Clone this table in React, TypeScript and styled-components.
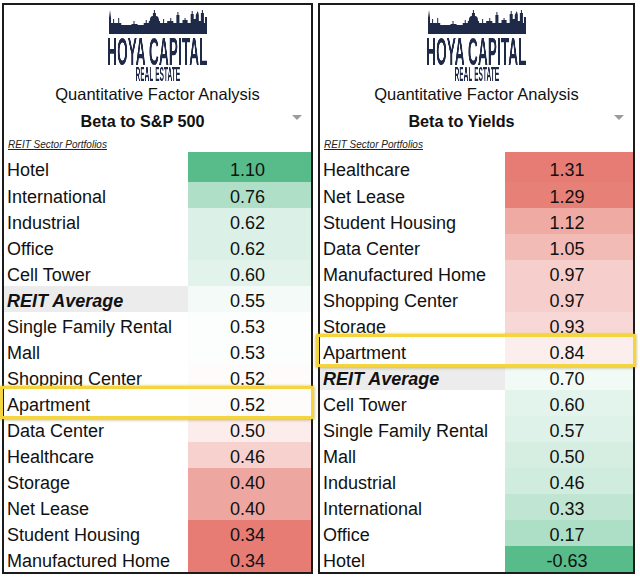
import React from "react";
import styled, { createGlobalStyle, css } from "styled-components";

type Row = { name: string; value: number; average?: boolean; highlight?: boolean };

type PanelData = {
  subtitle: string;
  width: number;
  labelWidth: number;
  highIsGreen: boolean;
  rows: Row[];
};

const GREEN = [87, 187, 138];
const RED = [230, 124, 115];

const SP500_ROWS: Row[] = [
  { name: "Hotel", value: 1.1 },
  { name: "International", value: 0.76 },
  { name: "Industrial", value: 0.62 },
  { name: "Office", value: 0.62 },
  { name: "Cell Tower", value: 0.6 },
  { name: "REIT Average", value: 0.55, average: true },
  { name: "Single Family Rental", value: 0.53 },
  { name: "Mall", value: 0.53 },
  { name: "Shopping Center", value: 0.52 },
  { name: "Apartment", value: 0.52, highlight: true },
  { name: "Data Center", value: 0.5 },
  { name: "Healthcare", value: 0.46 },
  { name: "Storage", value: 0.4 },
  { name: "Net Lease", value: 0.4 },
  { name: "Student Housing", value: 0.34 },
  { name: "Manufactured Home", value: 0.34 },
];

const YIELD_ROWS: Row[] = [
  { name: "Healthcare", value: 1.31 },
  { name: "Net Lease", value: 1.29 },
  { name: "Student Housing", value: 1.12 },
  { name: "Data Center", value: 1.05 },
  { name: "Manufactured Home", value: 0.97 },
  { name: "Shopping Center", value: 0.97 },
  { name: "Storage", value: 0.93 },
  { name: "Apartment", value: 0.84, highlight: true },
  { name: "REIT Average", value: 0.7, average: true },
  { name: "Cell Tower", value: 0.6 },
  { name: "Single Family Rental", value: 0.57 },
  { name: "Mall", value: 0.5 },
  { name: "Industrial", value: 0.46 },
  { name: "International", value: 0.33 },
  { name: "Office", value: 0.17 },
  { name: "Hotel", value: -0.63 },
];

const PANELS: PanelData[] = [
  { subtitle: "Beta to S&P 500", width: 311, labelWidth: 184, highIsGreen: true, rows: SP500_ROWS },
  { subtitle: "Beta to Yields", width: 317, labelWidth: 185, highIsGreen: false, rows: YIELD_ROWS },
];

// three-colour scale like a spreadsheet: min colour, white at the median, max colour
const scaleColors = (rows: Row[], highIsGreen: boolean) => {
  const values = rows.map((r) => r.value);
  const sorted = [...values].sort((a, b) => a - b);
  const mid = (sorted[sorted.length / 2 - 1] + sorted[sorted.length / 2]) / 2;
  const min = sorted[0];
  const max = sorted[sorted.length - 1];
  const high = highIsGreen ? GREEN : RED;
  const low = highIsGreen ? RED : GREEN;
  return values.map((v) => {
    const target = v >= mid ? high : low;
    let t = v >= mid ? (v - mid) / (max - mid) : (mid - v) / (mid - min);
    if (target === GREEN) t = Math.pow(t, 0.85);
    const mix = target.map((c) => Math.round(255 - (255 - c) * t));
    return `rgb(${mix.join(",")})`;
  });
};

const GlobalStyle = createGlobalStyle`
  body {
    margin: 0;
    background: #fff;
    font-family: "Liberation Sans", Arial, sans-serif;
    color: #111;
  }
`;

const Page = styled.div`
  display: flex;
  gap: 5px;
  padding: 3px 0 0 2px;
`;

const Panel = styled.section<{ $width: number }>`
  box-sizing: border-box;
  width: ${({ $width }) => $width}px;
  height: 571px;
  border: 2px solid #1b1b1b;
  display: flex;
  flex-direction: column;
  align-items: stretch;
`;

const Logo = styled.div`
  display: flex;
  flex-direction: column;
  align-items: center;
  margin-top: 5px;
  color: #1f2a48;
`;

const Skyline = styled.svg`
  display: block;
  width: 98px;
  height: 24px;
`;

// condensed wordmark: large Arial bold squeezed horizontally
const Wordmark = styled.div<{ $size: number; $lineHeight: number; $squeeze: number }>`
  height: ${({ $lineHeight }) => $lineHeight}px;
  font-family: "Liberation Sans", Arial, sans-serif;
  font-weight: 700;
  font-size: ${({ $size }) => $size}px;
  line-height: ${({ $lineHeight }) => $lineHeight}px;
  color: #1f2a48;
  white-space: nowrap;
  transform: scaleX(${({ $squeeze }) => $squeeze});
  transform-origin: center top;
  will-change: transform;
`;

const Title = styled.div`
  margin-top: 2px;
  font-size: 16.5px;
  line-height: 20px;
  text-align: center;
`;

const SubtitleRow = styled.div`
  display: flex;
  margin-top: 7px;
  height: 20px;
`;

const Subtitle = styled.div`
  flex: 1;
  font-size: 16.2px;
  font-weight: 700;
  line-height: 20px;
  text-align: center;
`;

const Dropdown = styled.div`
  width: 30px;
  display: flex;
  justify-content: flex-end;
  padding-right: 9px;
  padding-top: 4px;
  box-sizing: border-box;

  &::after {
    content: "";
    width: 0;
    height: 0;
    border-left: 5px solid transparent;
    border-right: 5px solid transparent;
    border-top: 5px solid #9b9b9b;
  }
`;

const Caption = styled.div`
  margin-top: 8px;
  padding-left: 4px;
  font-size: 10px;
  line-height: 12px;
  font-style: italic;
  text-decoration: underline;
  color: #222;
`;

const Table = styled.div`
  margin-top: 1px;
  display: flex;
  flex-direction: column;
`;

const TableRow = styled.div<{ $labelWidth: number; $first: boolean; $highlight: boolean }>`
  display: grid;
  grid-template-columns: ${({ $labelWidth }) => $labelWidth}px 1fr;
  height: ${({ $first }) => ($first ? 30 : 26)}px;
  font-size: 18px;
  line-height: 22px;
  box-sizing: border-box;

  ${({ $highlight }) =>
    $highlight &&
    css`
      position: relative;
      z-index: 1;

      & > div {
        box-shadow: 0 -2px 0 0 var(--cell-bg);
      }

      &::after {
        content: "";
        position: absolute;
        top: -4px;
        bottom: -3px;
        left: -4px;
        right: -3px;
        border: 3px solid #f4d53f;
        box-shadow: 0 0 3px rgba(238, 200, 40, 0.7), 0 1px 3px rgba(0, 0, 0, 0.25);
        pointer-events: none;
      }
    `}
`;

const Label = styled.div<{ $average: boolean; $first: boolean }>`
  --cell-bg: #fff;
  padding: ${({ $first }) => ($first ? 7 : 4)}px 0 0 3px;
  white-space: nowrap;
  background: #fff;

  ${({ $average }) =>
    $average &&
    css`
      --cell-bg: #ececec;
      background: #ececec;
      font-weight: 700;
      font-style: italic;
    `}
`;

const Value = styled.div<{ $bg: string; $first: boolean }>`
  --cell-bg: ${({ $bg }) => $bg};
  padding-top: ${({ $first }) => ($first ? 7 : 4)}px;
  padding-right: 4px;
  background: ${({ $bg }) => $bg};
  text-align: center;
`;

const SKYLINE_PATH =
  "M0 24 V8 L1 0 L2 8 V13 H4 V9 H5 V13 H9 V8 H10 V13 H12 V15 H22 V14 H24 V11 H25 V14 H28 V15 H34 V13 H36 V10 H37 V13 H39 V11 H40 Q40 6 43 6 V3 H44 V0 H45 V3 H46 V6 Q49 6 49 11 H50 V13 H53 V9 H54 V13 H57 V11 H60 V8 H61 V11 H63 V13 H66 V5 H67 V2 H68 V5 H69 V13 H72 V10 H74 V8 H75 V10 H77 V13 H80 V4 H81 V1 H82 V4 H83 V9 H85 V5 L87 1 L88 5 V11 H90 V3 H91 V0 H92 V3 H93 V13 H94 V7 H96 V24 Z";

const HoyaLogo: React.FC = () => (
  <Logo>
    <Skyline viewBox="0 0 96 24" preserveAspectRatio="none">
      <path d={SKYLINE_PATH} fill="currentColor" />
    </Skyline>
    <Wordmark $size={39} $lineHeight={31} $squeeze={0.353} style={{ marginTop: 2 }}>
      HOYA CAPITAL
    </Wordmark>
    <Wordmark $size={20} $lineHeight={15} $squeeze={0.33}>
      REAL ESTATE
    </Wordmark>
  </Logo>
);

const FactorPanel: React.FC<{ data: PanelData }> = ({ data }) => {
  const colors = scaleColors(data.rows, data.highIsGreen);
  return (
    <Panel $width={data.width}>
      <HoyaLogo />
      <Title>Quantitative Factor Analysis</Title>
      <SubtitleRow>
        <Subtitle>{data.subtitle}</Subtitle>
        <Dropdown />
      </SubtitleRow>
      <Caption>REIT Sector Portfolios</Caption>
      <Table>
        {data.rows.map((row, i) => (
          <TableRow
            key={row.name}
            $labelWidth={data.labelWidth}
            $first={i === 0}
            $highlight={!!row.highlight}
          >
            <Label $average={!!row.average} $first={i === 0}>
              {row.name}
            </Label>
            <Value $bg={colors[i]} $first={i === 0}>
              {row.value.toFixed(2)}
            </Value>
          </TableRow>
        ))}
      </Table>
    </Panel>
  );
};

const App: React.FC = () => (
  <>
    <GlobalStyle />
    <Page>
      {PANELS.map((panel) => (
        <FactorPanel key={panel.subtitle} data={panel} />
      ))}
    </Page>
  </>
);

export default App;
